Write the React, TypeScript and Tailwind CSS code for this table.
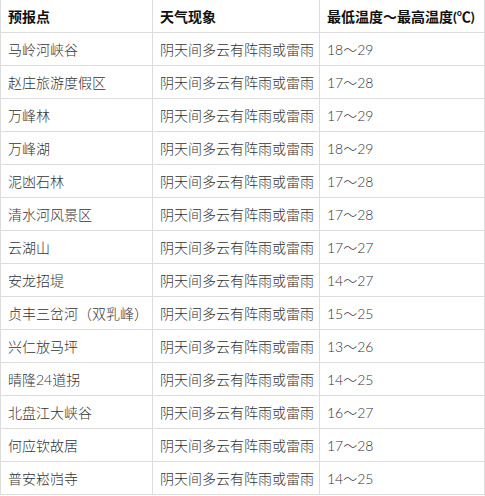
const rows: [string, string, string][] = [
  ['马岭河峡谷', '阴天间多云有阵雨或雷雨', '18～29'],
  ['赵庄旅游度假区', '阴天间多云有阵雨或雷雨', '17～28'],
  ['万峰林', '阴天间多云有阵雨或雷雨', '17～29'],
  ['万峰湖', '阴天间多云有阵雨或雷雨', '18～29'],
  ['泥凼石林', '阴天间多云有阵雨或雷雨', '17～28'],
  ['清水河风景区', '阴天间多云有阵雨或雷雨', '17～28'],
  ['云湖山', '阴天间多云有阵雨或雷雨', '17～27'],
  ['安龙招堤', '阴天间多云有阵雨或雷雨', '14～27'],
  ['贞丰三岔河（双乳峰）', '阴天间多云有阵雨或雷雨', '15～25'],
  ['兴仁放马坪', '阴天间多云有阵雨或雷雨', '13～26'],
  ['晴隆24道拐', '阴天间多云有阵雨或雷雨', '14～25'],
  ['北盘江大峡谷', '阴天间多云有阵雨或雷雨', '16～27'],
  ['何应钦故居', '阴天间多云有阵雨或雷雨', '17～28'],
  ['普安崧岿寺', '阴天间多云有阵雨或雷雨', '14～25'],
];

const font = 'font-["Lato","Noto_Sans_CJK_SC",sans-serif]';

export default function App() {
  return (
    <div className={`w-[485px] h-[496px] bg-white overflow-hidden text-[14px] text-[#333] ${font}`}>
      <div className="w-[485px] border-x border-[#ddd]">
        <div className="grid grid-cols-[152px_167px_164px] h-[33px] border-b border-[#ddd] font-bold text-[#111]">
          <div className="flex items-center pl-[7px] border-r border-[#ddd]">预报点</div>
          <div className="flex items-center pl-[7px] border-r border-[#ddd]">天气现象</div>
          <div className="flex items-center pl-[7px]">最低温度～最高温度(℃)</div>
        </div>
        {rows.map(([a, b, c]) => (
          <div key={a} className="grid grid-cols-[152px_167px_164px] h-[33px] border-b border-[#ddd] font-light">
            <div className="flex items-center pl-[7px] border-r border-[#ddd]">{a}</div>
            <div className="flex items-center pl-[7px] border-r border-[#ddd]">{b}</div>
            <div className="flex items-center pl-[7px]">{c}</div>
          </div>
        ))}
      </div>
    </div>
  );
}
